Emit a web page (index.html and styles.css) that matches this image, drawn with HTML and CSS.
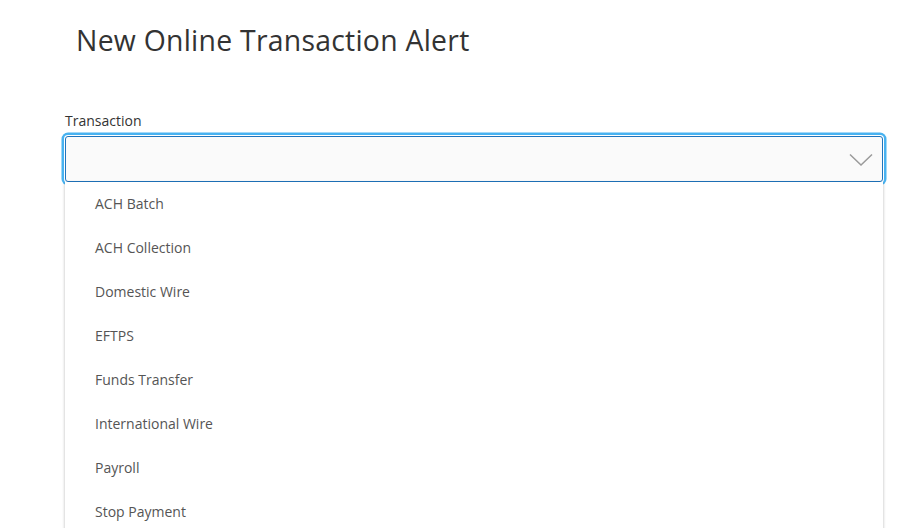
FILE: index.html
```html
<!DOCTYPE html>
<html lang="en">
<head>
<meta charset="utf-8">
<title>New Online Transaction Alert</title>
<link rel="stylesheet" href="styles.css">
</head>
<body>
<main class="page">
  <h1 class="title">New Online Transaction Alert</h1>
  <div class="field">
    <label class="label">Transaction</label>
    <div class="select-wrap">
      <div class="select">
        <svg class="chevron" width="24" height="14" viewBox="0 0 24 14" aria-hidden="true">
          <polyline points="1,1.5 12,12 23,1.5" fill="none" stroke="#9a9a9a" stroke-width="1.5"/>
        </svg>
      </div>
      <ul class="menu">
        <li class="option">ACH Batch</li>
        <li class="option">ACH Collection</li>
        <li class="option">Domestic Wire</li>
        <li class="option">EFTPS</li>
        <li class="option">Funds Transfer</li>
        <li class="option">International Wire</li>
        <li class="option">Payroll</li>
        <li class="option">Stop Payment</li>
      </ul>
    </div>
  </div>
</main>
</body>
</html>
```

FILE: styles.css
```css
html, body {
  margin: 0;
  padding: 0;
  background: #ffffff;
  overflow: hidden;
}
body {
  font-family: "Open Sans", "Noto Sans", sans-serif;
  color: #333333;
}
.page {
  padding: 21px 14px 0 65px;
  height: 528px;
  box-sizing: border-box;
}
.title {
  margin: 0 0 0 11px;
  font-size: 28.4px;
  letter-spacing: 0.25px;
  line-height: 38px;
  font-weight: 400;
  color: #333333;
}
.field {
  margin-top: 51px;
  width: 818px;
}
.label {
  display: block;
  font-size: 14px;
  font-weight: 500;
  line-height: 18px;
  color: #333333;
  padding-top: 2px;
  margin-bottom: 6px;
}
.select-wrap {
  position: relative;
}
.select {
  height: 46px;
  box-sizing: border-box;
  border: 1px solid #1f74bd;
  border-radius: 3px;
  background: #fafafa;
  box-shadow: 0 0 0 1px #ffffff, 0 0 0 3.5px #48b2f0;
  display: flex;
  align-items: center;
  justify-content: flex-end;
  padding-right: 9px;
}
.chevron {
  display: block;
  margin-top: 2px;
}
.menu {
  position: absolute;
  left: 0;
  right: 0;
  top: 46px;
  margin: 0;
  padding: 0;
  list-style: none;
  background: #ffffff;
  box-shadow: 0 1px 3px rgba(0, 0, 0, 0.28);
  z-index: 2;
}
.option {
  height: 44px;
  line-height: 44px;
  padding-left: 30px;
  font-size: 14px;
  color: #555555;
}
```
